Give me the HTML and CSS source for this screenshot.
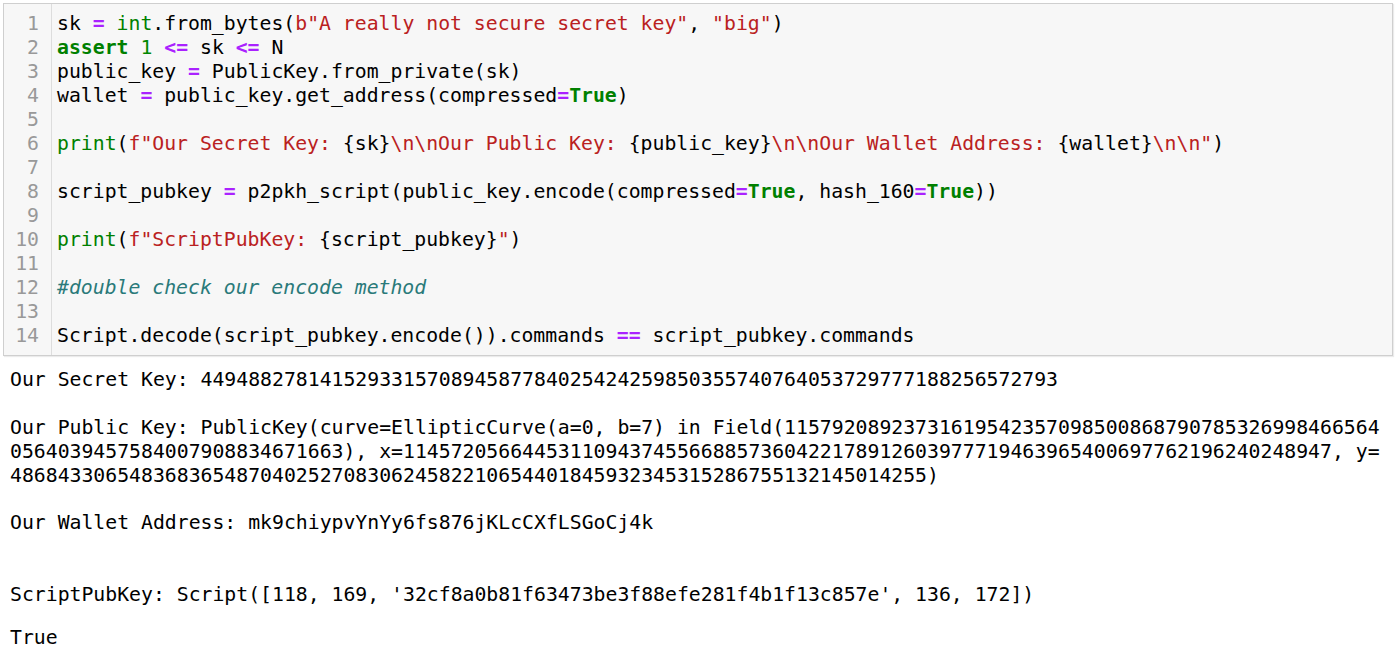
FILE: index.html
```html
<!DOCTYPE html>
<html>
<head>
<meta charset="utf-8">
<link rel="stylesheet" href="styles.css">
</head>
<body>
<div class="cell">
  <pre class="gutter">1
2
3
4
5
6
7
8
9
10
11
12
13
14</pre>
  <pre class="code">sk <span class="op">=</span> <span class="bi">int</span>.from_bytes(<span class="st">b"A really not secure secret key"</span>, <span class="st">"big"</span>)
<span class="kw">assert</span> <span class="nu">1</span> <span class="op">&lt;=</span> sk <span class="op">&lt;=</span> N
public_key <span class="op">=</span> PublicKey.from_private(sk)
wallet <span class="op">=</span> public_key.get_address(compressed<span class="op">=</span><span class="kw">True</span>)

<span class="bi">print</span>(<span class="st">f"Our Secret Key: </span>{sk}<span class="st">\n\nOur Public Key: </span>{public_key}<span class="st">\n\nOur Wallet Address: </span>{wallet}<span class="st">\n\n"</span>)

script_pubkey <span class="op">=</span> p2pkh_script(public_key.encode(compressed<span class="op">=</span><span class="kw">True</span>, hash_160<span class="op">=</span><span class="kw">True</span>))

<span class="bi">print</span>(<span class="st">f"ScriptPubKey: </span>{script_pubkey}<span class="st">"</span>)

<span class="cm">#double check our encode method</span>

Script.decode(script_pubkey.encode()).commands <span class="op">==</span> script_pubkey.commands</pre>
</div>
<div class="output">
<pre class="stream">Our Secret Key: 449488278141529331570894587784025424259850355740764053729777188256572793

Our Public Key: PublicKey(curve=EllipticCurve(a=0, b=7) in Field(115792089237316195423570985008687907853269984665640564039457584007908834671663), x=114572056644531109437455668857360422178912603977719463965400697762196240248947, y=48684330654836836548704025270830624582210654401845932345315286755132145014255)

Our Wallet Address: mk9chiypvYnYy6fs876jKLcCXfLSGoCj4k


ScriptPubKey: Script([118, 169, '32cf8a0b81f63473be3f88efe281f4b1f13c857e', 136, 172])</pre>
<pre class="result">True</pre>
</div>
</body>
</html>
```

FILE: styles.css
```css
html, body {
  margin: 0;
  background: #ffffff;
}
body {
  padding: 3px 7px 0 3px;
  font-family: "DejaVu Sans Mono", "Liberation Mono", monospace;
  font-size: 19.8px;
  color: #000;
}
pre {
  margin: 0;
  font-family: inherit;
  font-size: inherit;
}
.cell {
  display: flex;
  background: #f7f7f7;
  border: 1px solid #cfcfcf;
  box-shadow: 1px 1px 1px rgba(0,0,0,0.08);
}
.gutter {
  width: 35px;
  padding: 8px 12px 7px 0;
  text-align: right;
  color: #999999;
  line-height: 24px;
  border-right: 1px solid #dddddd;
}
.code {
  flex: 1;
  padding: 8px 0 7px 5px;
  line-height: 24px;
}
.op { color: #aa22ff; font-weight: bold; }
.kw { color: #008000; font-weight: bold; }
.bi { color: #008000; }
.nu { color: #008800; }
.st { color: #ba2121; }
.cm { color: #2a7a7a; font-style: italic; }
.output {
  padding: 12px 0 0 7px;
}
.stream, .result {
  width: 1375px;
  line-height: 23.9px;
  white-space: pre-wrap;
  word-break: break-all;
}
.result {
  margin-top: 19px;
}
```
